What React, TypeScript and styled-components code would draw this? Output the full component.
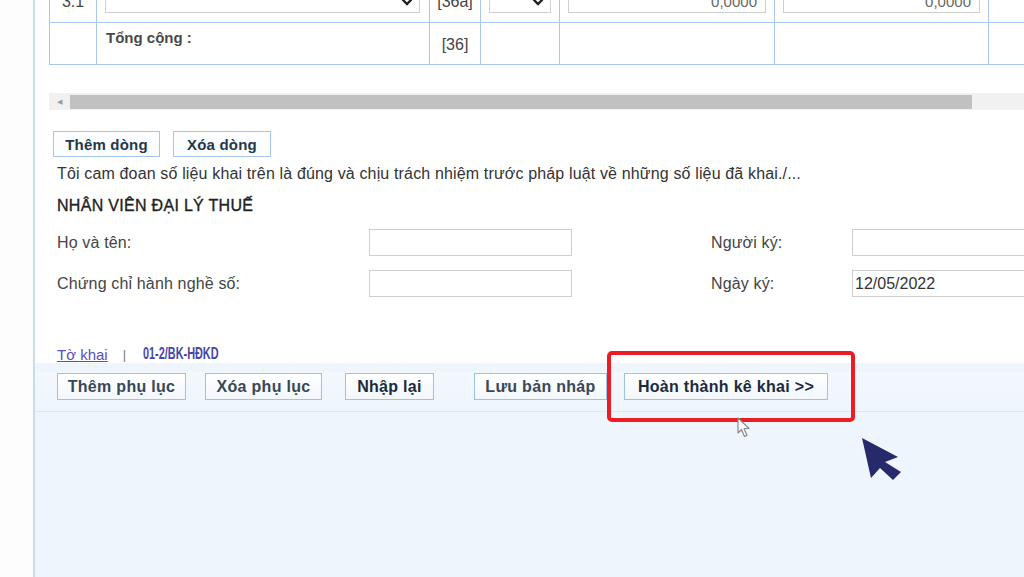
import React from 'react';
import styled, { createGlobalStyle } from 'styled-components';

const GlobalStyle = createGlobalStyle`
  html, body {
    margin: 0;
    padding: 0;
    width: 1024px;
    height: 577px;
    overflow: hidden;
    background: #fdfdfd;
    font-family: 'Liberation Sans', Arial, sans-serif;
  }
`;

const Page = styled.div`
  position: relative;
  display: flex;
  width: 1024px;
  height: 577px;
  overflow: hidden;
`;

const Gutter = styled.div`
  width: 33px;
  flex-shrink: 0;
  background: #fdfdfd;
`;

const Main = styled.div`
  display: flex;
  flex-direction: column;
  flex: 1;
  min-width: 0;
  overflow: hidden;
  border-left: 2px solid #c8dcf1;
  background: #eef5fd;
`;

const Sheet = styled.div`
  display: flex;
  flex-direction: column;
  background: #ffffff;
`;

const TableWrap = styled.div`
  margin-top: -20px;
  margin-left: 14px;
  overflow: hidden;
`;

const Table = styled.table`
  border-collapse: collapse;
  table-layout: fixed;
  width: 1040px;
  font-size: 16px;
  color: #444;

  td {
    border: 1px solid #a9c7ea;
    padding: 0;
    height: 41px;
  }
`;

const Cell = styled.td<{ $align?: string; $top?: boolean }>`
  text-align: ${(p) => p.$align || 'left'};
  vertical-align: ${(p) => (p.$top ? 'top' : 'middle')};
`;

const SelectBox = styled.div<{ $w: number }>`
  display: flex;
  align-items: center;
  justify-content: flex-end;
  width: ${(p) => p.$w}px;
  height: 23px;
  margin-left: 8px;
  border: 1px solid #cfcfcf;
  background: #fff;
  box-sizing: border-box;
  padding-right: 6px;
`;

const NumBox = styled.div`
  height: 23px;
  margin: 0 8px;
  border: 1px solid #cfcfcf;
  box-sizing: border-box;
  text-align: right;
  padding-right: 8px;
  line-height: 21px;
  font-size: 15px;
  color: #666;
`;

const TotalLabel = styled.div`
  padding: 6px 0 0 9px;
  font-size: 15px;
  font-weight: bold;
  color: #4a4a4a;
`;

const TotalCode = styled.span`
  position: relative;
  top: 1px;
`;

const ScrollTrack = styled.div`
  display: flex;
  align-items: center;
  height: 17px;
  margin: 28px 0 0 14px;
  background: #f1f1f1;
`;

const ScrollArrow = styled.span`
  width: 21px;
  text-align: center;
  font-size: 7px;
  color: #9a9a9a;
`;

const ScrollThumb = styled.div`
  width: 902px;
  height: 14px;
  background: #c1c1c1;
`;

const RowButtons = styled.div`
  display: flex;
  gap: 13px;
  margin: 21px 0 0 18px;
`;

const LineButton = styled.button<{ $w: number }>`
  width: ${(p) => p.$w}px;
  height: 26px;
  border: 1px solid #a6c6e8;
  background: #fbfdff;
  font-family: 'Liberation Sans', Arial, sans-serif;
  font-size: 15px;
  font-weight: bold;
  letter-spacing: 0.2px;
  color: #24374a;
  padding: 0;
`;

const Pledge = styled.p`
  margin: 7px 0 0 22px;
  font-size: 16px;
  letter-spacing: 0.15px;
  color: #333;
  line-height: 19px;
  white-space: nowrap;
`;

const Heading = styled.h3`
  margin: 13px 0 0 22px;
  font-size: 16px;
  font-weight: normal;
  letter-spacing: 0.3px;
  color: #222;
  line-height: 19px;
  -webkit-text-stroke: 0.35px #222;
`;

const FormGrid = styled.div`
  display: grid;
  grid-template-columns: 312px 203px 280px 210px;
  row-gap: 14px;
  margin: 14px 0 0 22px;
  align-items: center;
`;

const Label = styled.span<{ $indent?: number }>`
  padding-left: ${(p) => p.$indent || 0}px;
  font-size: 16px;
  letter-spacing: 0.15px;
  color: #444;
  white-space: nowrap;
`;

const Field = styled.div`
  height: 27px;
  border: 1px solid #cfcfcf;
  box-sizing: border-box;
  background: #fff;
  font-size: 16px;
  color: #333;
  line-height: 25px;
  padding-left: 2px;
`;

const Crumbs = styled.div`
  display: flex;
  align-items: center;
  gap: 15px;
  margin: 48px 0 0 22px;
  height: 18px;
  font-size: 15px;
`;

const CrumbLink = styled.a`
  color: #5a4fc2;
  text-decoration: underline;
`;

const CrumbSep = styled.span`
  color: #777;
  font-size: 13px;
`;

const CrumbCurrent = styled.span`
  display: inline-block;
  margin-left: 2px;
  font-size: 17px;
  font-weight: bold;
  color: #4746a6;
  transform: scaleX(0.64);
  transform-origin: left center;
`;

const ActionBar = styled.div`
  display: flex;
  align-items: flex-start;
  padding: 1px 0 11px 22px;
  margin-top: 9px;
  background: linear-gradient(#f3f8fd, #eef5fd);
  border-bottom: 1px solid #dde8f3;
`;

const ActionButton = styled.button<{ $w: number; $ml: number; $dark?: boolean }>`
  width: ${(p) => p.$w}px;
  height: 27px;
  margin-left: ${(p) => p.$ml}px;
  border: 1px solid #9ec2e6;
  background: linear-gradient(#ffffff, #f2f7fc);
  font-family: 'Liberation Sans', Arial, sans-serif;
  font-size: 16px;
  font-weight: bold;
  letter-spacing: 0.3px;
  color: ${(p) => (p.$dark ? '#1b2b3c' : '#3a4756')};
  padding: 0;
  white-space: nowrap;
`;

const Highlight = styled.div`
  position: absolute;
  left: 607px;
  top: 351px;
  width: 248px;
  height: 71px;
  box-sizing: border-box;
  border: 4px solid #ec1c24;
  border-radius: 5px;
`;

const Pointer = styled.svg<{ $x: number; $y: number }>`
  position: absolute;
  left: ${(p) => p.$x}px;
  top: ${(p) => p.$y}px;
`;

const Chevron = () => (
  <svg width="12" height="8" viewBox="0 0 12 8">
    <path d="M1.5 1.5 L6 6 L10.5 1.5" fill="none" stroke="#222" strokeWidth="2.4" />
  </svg>
);

export default function App() {
  return (
    <Page>
      <GlobalStyle />
      <Gutter />
      <Main>
        <Sheet>
          <TableWrap>
            <Table>
              <colgroup>
                <col style={{ width: 47 }} />
                <col style={{ width: 333 }} />
                <col style={{ width: 51 }} />
                <col style={{ width: 79 }} />
                <col style={{ width: 215 }} />
                <col style={{ width: 214 }} />
                <col style={{ width: 101 }} />
              </colgroup>
              <tbody>
                <tr>
                  <Cell $align="center">3.1</Cell>
                  <Cell>
                    <SelectBox $w={315}>
                      <Chevron />
                    </SelectBox>
                  </Cell>
                  <Cell $align="center">[36a]</Cell>
                  <Cell>
                    <SelectBox $w={62}>
                      <Chevron />
                    </SelectBox>
                  </Cell>
                  <Cell>
                    <NumBox>0,0000</NumBox>
                  </Cell>
                  <Cell>
                    <NumBox>0,0000</NumBox>
                  </Cell>
                  <Cell />
                </tr>
                <tr>
                  <Cell />
                  <Cell $top>
                    <TotalLabel>Tổng cộng :</TotalLabel>
                  </Cell>
                  <Cell $align="center">
                    <TotalCode>[36]</TotalCode>
                  </Cell>
                  <Cell />
                  <Cell />
                  <Cell />
                  <Cell />
                </tr>
              </tbody>
            </Table>
          </TableWrap>

          <ScrollTrack>
            <ScrollArrow>◀</ScrollArrow>
            <ScrollThumb />
          </ScrollTrack>

          <RowButtons>
            <LineButton $w={107}>Thêm dòng</LineButton>
            <LineButton $w={98}>Xóa dòng</LineButton>
          </RowButtons>

          <Pledge>
            Tôi cam đoan số liệu khai trên là đúng và chịu trách nhiệm trước pháp luật về những số liệu đã khai./...
          </Pledge>
          <Heading>NHÂN VIÊN ĐẠI LÝ THUẾ</Heading>

          <FormGrid>
            <Label>Họ và tên:</Label>
            <Field />
            <Label $indent={139}>Người ký:</Label>
            <Field />
            <Label>Chứng chỉ hành nghề số:</Label>
            <Field />
            <Label $indent={139}>Ngày ký:</Label>
            <Field>12/05/2022</Field>
          </FormGrid>

          <Crumbs>
            <CrumbLink>Tờ khai</CrumbLink>
            <CrumbSep>|</CrumbSep>
            <CrumbCurrent>01-2/BK-HĐKD</CrumbCurrent>
          </Crumbs>
        </Sheet>

        <ActionBar>
          <ActionButton $w={129} $ml={0}>Thêm phụ lục</ActionButton>
          <ActionButton $w={117} $ml={19}>Xóa phụ lục</ActionButton>
          <ActionButton $w={89} $ml={23} $dark>Nhập lại</ActionButton>
          <ActionButton $w={133} $ml={40}>Lưu bản nháp</ActionButton>
          <ActionButton $w={204} $ml={17} $dark>Hoàn thành kê khai &gt;&gt;</ActionButton>
        </ActionBar>
      </Main>

      <Highlight />

      <Pointer $x={737} $y={417} width="16" height="22" viewBox="0 0 16 22">
        <path
          d="M1 1 L1 16 L4.5 12.5 L7.5 19.5 L10 18.5 L7 11.5 L12 11.5 Z"
          fill="#ffffff"
          stroke="#8a8a8a"
          strokeWidth="1.2"
          strokeLinejoin="round"
        />
      </Pointer>

      <Pointer $x={860} $y={436} width="44" height="46" viewBox="0 0 44 46">
        <path d="M2 2 L38 21 L25 26 L41 36 L33 44 L20 32 L11 42 Z" fill="#26296a" />
      </Pointer>
    </Page>
  );
}
